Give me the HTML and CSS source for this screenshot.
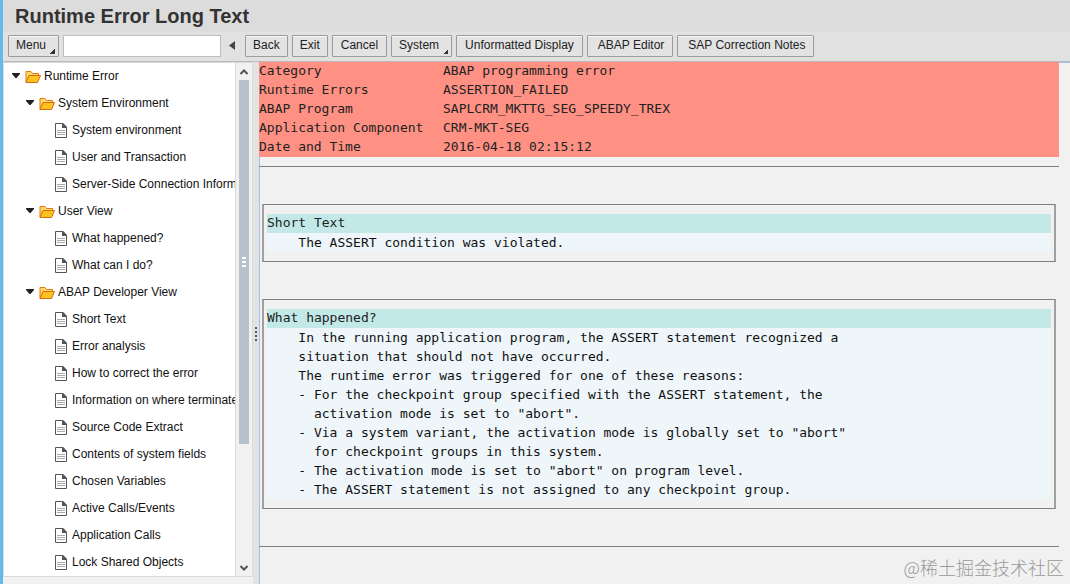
FILE: index.html
```html
<!DOCTYPE html>
<html lang="en">
<head>
<meta charset="utf-8">
<title>Runtime Error Long Text</title>
<link rel="stylesheet" href="styles.css">
</head>
<body>
<svg class="defs" aria-hidden="true">
  <symbol id="folder" viewBox="0 0 16 14">
    <path d="M1 12.500V1.500H6L7.500 3.500H13.500V6" fill="#ffd86b" stroke="#e07a10"/>
    <path d="M1 12.500L4 5.500H15.500L12.500 12.500Z" fill="#ffc31f" stroke="#d9690f"/>
  </symbol>
  <symbol id="doc" viewBox="0 0 12 15">
    <path d="M.5.5H8L11.500 4.500V14.500H.5Z" fill="#fff" stroke="#555"/>
    <path d="M7 0H8L12 4V5H7Z" fill="#555"/>
    <path d="M2 7.500H10M2 9.500H10M2 11.500H10" stroke="#aaa"/>
  </symbol>
  <symbol id="open" viewBox="0 0 8 5"><path d="M0 0H8V1L4.500 5H3.500L0 1Z" fill="#222"/></symbol>
</svg>
<div class="app">
  <header class="title"><h1>Runtime Error Long Text</h1></header>
  <nav class="toolbar" aria-label="Toolbar">
    <button class="btn drop">Menu</button>
    <input class="command" type="text" aria-label="Command">
    <button class="collapse" aria-label="Hide command field"><svg width="6" height="9" viewBox="0 0 6 9"><path d="M6 0V9L0 4.500Z" fill="#444"/></svg></button>
    <button class="btn">Back</button>
    <button class="btn">Exit</button>
    <button class="btn wide">Cancel</button>
    <button class="btn drop">System</button>
    <button class="btn wide">Unformatted Display</button>
    <button class="btn wide lead">ABAP Editor</button>
    <button class="btn wide lead">SAP Correction Notes</button>
  </nav>
  <main class="work">
    <aside class="side">
      <nav class="tree" aria-label="Error sections">
        <button class="node"><svg class="tri"><use href="#open"/></svg><svg class="folder"><use href="#folder"/></svg>Runtime Error</button>
        <ul>
          <li><button class="node"><svg class="tri"><use href="#open"/></svg><svg class="folder"><use href="#folder"/></svg>System Environment</button>
            <ul>
              <li><a class="node leaf" href="#"><svg class="doc"><use href="#doc"/></svg>System environment</a></li>
              <li><a class="node leaf" href="#"><svg class="doc"><use href="#doc"/></svg>User and Transaction</a></li>
              <li><a class="node leaf" href="#"><svg class="doc"><use href="#doc"/></svg>Server-Side Connection Information</a></li>
            </ul></li>
          <li><button class="node"><svg class="tri"><use href="#open"/></svg><svg class="folder"><use href="#folder"/></svg>User View</button>
            <ul>
              <li><a class="node leaf" href="#"><svg class="doc"><use href="#doc"/></svg>What happened?</a></li>
              <li><a class="node leaf" href="#"><svg class="doc"><use href="#doc"/></svg>What can I do?</a></li>
            </ul></li>
          <li><button class="node"><svg class="tri"><use href="#open"/></svg><svg class="folder"><use href="#folder"/></svg>ABAP Developer View</button>
            <ul>
              <li><a class="node leaf" href="#"><svg class="doc"><use href="#doc"/></svg>Short Text</a></li>
              <li><a class="node leaf" href="#"><svg class="doc"><use href="#doc"/></svg>Error analysis</a></li>
              <li><a class="node leaf" href="#"><svg class="doc"><use href="#doc"/></svg>How to correct the error</a></li>
              <li><a class="node leaf" href="#"><svg class="doc"><use href="#doc"/></svg>Information on where terminated</a></li>
              <li><a class="node leaf" href="#"><svg class="doc"><use href="#doc"/></svg>Source Code Extract</a></li>
              <li><a class="node leaf" href="#"><svg class="doc"><use href="#doc"/></svg>Contents of system fields</a></li>
              <li><a class="node leaf" href="#"><svg class="doc"><use href="#doc"/></svg>Chosen Variables</a></li>
              <li><a class="node leaf" href="#"><svg class="doc"><use href="#doc"/></svg>Active Calls/Events</a></li>
              <li><a class="node leaf" href="#"><svg class="doc"><use href="#doc"/></svg>Application Calls</a></li>
              <li><a class="node leaf" href="#"><svg class="doc"><use href="#doc"/></svg>Lock Shared Objects</a></li>
            </ul></li>
        </ul>
      </nav>
      <div class="scroll">
        <button class="arrow" aria-label="Scroll up"><svg width="8" height="6" viewBox="0 0 8 6"><path d="M.5 5L4 1.500L7.500 5" fill="none" stroke="#555" stroke-width="2"/></svg></button>
        <div class="track"><div class="thumb"><i></i><i></i><i></i></div></div>
        <button class="arrow" aria-label="Scroll down"><svg width="8" height="6" viewBox="0 0 8 6"><path d="M.5 1L4 4.500L7.500 1" fill="none" stroke="#555" stroke-width="2"/></svg></button>
      </div>
    </aside>
    <div class="splitter"><i></i><i></i><i></i><i></i></div>
    <section class="content">
      <table class="summary">
        <tbody>
          <tr><th scope="row">Category</th><td>ABAP programming error</td></tr>
          <tr><th scope="row">Runtime Errors</th><td>ASSERTION_FAILED</td></tr>
          <tr><th scope="row">ABAP Program</th><td>SAPLCRM_MKTTG_SEG_SPEEDY_TREX</td></tr>
          <tr><th scope="row">Application Component</th><td>CRM-MKT-SEG</td></tr>
          <tr><th scope="row">Date and Time</th><td>2016-04-18 02:15:12</td></tr>
        </tbody>
      </table>
      <hr>
      <article class="box">
        <h2>Short Text</h2>
        <pre>    The ASSERT condition was violated.</pre>
      </article>
      <article class="box">
        <h2>What happened?</h2>
        <pre>    In the running application program, the ASSERT statement recognized a
    situation that should not have occurred.
    The runtime error was triggered for one of these reasons:
    - For the checkpoint group specified with the ASSERT statement, the
      activation mode is set to "abort".
    - Via a system variant, the activation mode is globally set to "abort"
      for checkpoint groups in this system.
    - The activation mode is set to "abort" on program level.
    - The ASSERT statement is not assigned to any checkpoint group.</pre>
      </article>
      <hr>
    </section>
  </main>
  <div class="watermark">@稀土掘金技术社区</div>
</div>
</body>
</html>
```

FILE: styles.css
```css
* { box-sizing: border-box; }
body { margin: 0; font: 12px "Liberation Sans", Arial, sans-serif; color: #222; }
button, input { font: inherit; color: inherit; }
ul { list-style: none; margin: 0; padding: 0; }
svg { flex: none; display: block; }
.defs { position: absolute; width: 0; height: 0; }

.app {
  display: flex;
  flex-direction: column;
  height: 100vh;
  border-left: 3px solid #66b9eb;
  background: #f1f1f1;
  position: relative;
  overflow: hidden;
}
.title { height: 32px; padding-left: 12px; background: #dcdcdc; flex: none; }
.title h1 { margin: 0; font-size: 20px; line-height: 32px; color: #333; }

.toolbar {
  display: flex;
  align-items: center;
  gap: 4px;
  flex: none;
  height: 30px;
  padding: 0 5px 2px;
  background: #e1e1e1;
  border-bottom: 1px solid #b9b9b9;
}
.btn {
  flex: none;
  height: 22px;
  padding: 0 7px 1px;
  border: 1px solid #9c9c9c;
  border-radius: 1px;
  background: #e3e3e3;
  box-shadow: inset 0 1px #f7f7f7;
  white-space: nowrap;
}
.wide { padding-left: 8px; padding-right: 8px; }
.drop {
  padding-right: 12px;
  background: linear-gradient(135deg, transparent 50%, #333 50%) right 3px bottom 2px / 5px 5px no-repeat #e3e3e3;
}
.lead { padding-left: 10px; }
.command { width: 158px; height: 22px; padding: 0 4px; border: 1px solid #bcbcbc; background: #fff; }
.collapse { display: flex; justify-content: center; width: 16px; padding: 0 3px 0 0; border: 0; background: none; }

.work { display: flex; flex: 1; min-height: 0; }
.side {
  display: flex;
  flex: none;
  width: 250px;
  margin-bottom: 7px;
  border: 1px solid #dadada;
  background: #fff;
}
.tree { flex: 1; min-width: 0; overflow: hidden; color: #111; }
.node {
  display: flex;
  align-items: center;
  height: 27px;
  padding: 0 0 2px 8px;
  border: 0;
  background: none;
  color: inherit;
  text-decoration: none;
  white-space: nowrap;
}
.tree li .node { padding-left: 22px; }
.tree li .leaf { padding-left: 51px; }
.tri { width: 8px; height: 5px; margin-right: 5px; }
.folder { width: 16px; height: 14px; margin: 3px 3px 0 0; }
.doc { width: 12px; height: 15px; margin: 2px 5px 0 0; }

.scroll {
  display: flex;
  flex-direction: column;
  width: 17px;
  border-left: 1px solid #dadada;
  background: #f1f1f1;
}
.arrow { display: flex; align-items: center; justify-content: center; height: 17px; padding: 0; border: 0; background: none; }
.track { flex: 1; padding: 0 3px; }
.thumb {
  display: flex;
  flex-direction: column;
  align-items: center;
  justify-content: center;
  gap: 2px;
  height: 76%;
  background: #b8c2cc;
}
.thumb i { width: 4px; height: 2px; background: #fff; }

.splitter {
  display: flex;
  flex-direction: column;
  align-items: center;
  justify-content: center;
  gap: 2px;
  flex: none;
  width: 6px;
  padding-top: 22px;
  background: #e3e3e3;
}
.splitter i { width: 2px; height: 2px; background: #555; }

.content {
  flex: 1;
  min-width: 0;
  padding-right: 11px;
  box-shadow: inset 1px 1px #a3c1ee;
  font: 13px/19px "DejaVu Sans Mono", monospace;
  color: #111;
}
.summary { width: 100%; border-collapse: collapse; background: #ff9184; color: #222; }
.summary th, .summary td { height: 19px; padding: 0 0 2px; line-height: 17px; font-weight: normal; text-align: left; }
.summary th { width: 184px; }
hr { height: 1px; margin: 9px 0 37px; border: 0; background: #808080; }
.box {
  margin: 0 3px 37px;
  padding: 9px 3px;
  border: solid #808080;
  border-width: 1px 2px;
  border-left-color: #a0a0a0;
  border-right-color: #a0a0a0;
}
.box h2 { margin: 0; padding-bottom: 2px; font: inherit; line-height: 17px; color: #222; background: #c2e9e7; }
.box pre { margin: 0; font: inherit; background: #eef6fa; }

.watermark {
  position: absolute;
  right: 6px;
  bottom: 5px;
  font: 300 18px/24px "Noto Sans CJK SC", sans-serif;
  color: #999;
}
```
